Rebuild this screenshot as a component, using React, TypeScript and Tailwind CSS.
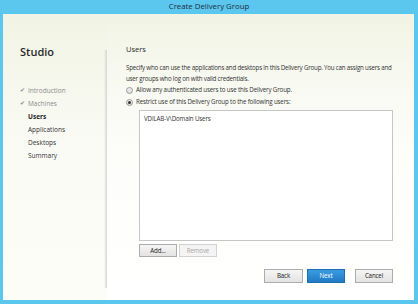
const steps = [
  { label: "Introduction", done: true },
  { label: "Machines", done: true },
  { label: "Users", current: true },
  { label: "Applications" },
  { label: "Desktops" },
  { label: "Summary" },
];

const Radio: React.FC<{ checked?: boolean }> = ({ checked }) => (
  <span className="w-[7px] h-[7px] rounded-full border border-[#9a9a9a] bg-gradient-to-b from-[#f0f0f0] to-[#dcdcdc] flex items-center justify-center shrink-0">
    {checked && <span className="w-[3px] h-[3px] rounded-full bg-[#333]" />}
  </span>
);

const App: React.FC = () => {
  return (
    <div className="w-[418px] h-[304px] bg-[#5bc6ee] flex flex-col font-['Open_Sans',sans-serif] overflow-hidden">
      <div className="h-[14px] flex items-center justify-center text-[7.8px] text-[#1c2e40]">Create Delivery Group</div>
      <div className="flex-1 ml-[3px] mr-[4px] mb-[4px] flex bg-gradient-to-b from-[#f1f4e4] via-[#fbfbf6] to-[#fdfdf8]">
        <aside className="w-[104px] shrink-0 relative pl-[17px] pt-[31px]">
          <div className="text-[11px] font-semibold text-[#2a2a2a] leading-[14px]">Studio</div>
          <ul className="mt-[25px] flex flex-col">
            {steps.map((s) => (
              <li key={s.label} className="h-[13px] flex items-center text-[6.5px]">
                <span className="w-[8px] text-[6px] text-[#8a8a8a]">{s.done ? "✔" : ""}</span>
                <span className={s.current ? "font-bold text-[#222]" : s.done ? "text-[#8c8c8c]" : "text-[#333]"}>{s.label}</span>
              </li>
            ))}
          </ul>
          <div className="absolute right-0 top-[36px] bottom-[12px] w-[3px] bg-gradient-to-r from-transparent to-[#d4d4d4]" />
        </aside>
        <main className="flex-1 pl-[19px] pr-[21px] pt-[30px] bg-gradient-to-b from-transparent to-white text-[#333] tracking-[-0.15px]">
          <div className="text-[7.5px] leading-[10px] text-[#2a2a2a] tracking-normal">Users</div>
          <p className="mt-[8px] mr-[-10px] text-[6.2px] leading-[11px] tracking-[-0.2px]">
            Specify who can use the applications and desktops in this Delivery Group. You can assign users and user groups who log on with valid credentials.
          </p>
          <label className="h-[12px] flex items-center gap-[3px] text-[6.2px]">
            <Radio />
            Allow any authenticated users to use this Delivery Group.
          </label>
          <label className="h-[12px] flex items-center gap-[3px] text-[6.2px]">
            <Radio checked />
            Restrict use of this Delivery Group to the following users:
          </label>
          <div className="ml-[13px] mt-[2px] h-[131px] border border-[#c6c6c6] bg-white px-[4px] pt-[3px] text-[6.2px]">
            VDILAB-V\Domain Users
          </div>
          <div className="ml-[13px] mt-[3px] flex gap-[2px]">
            <button className="w-[38px] h-[13px] border border-[#acacac] bg-gradient-to-b from-[#f5f5f5] to-[#e3e3e3] text-[6.2px] text-[#222]">Add...</button>
            <button className="w-[38px] h-[13px] border border-[#d2d2d2] bg-[#f4f4f4] text-[6.2px] text-[#a8a8a8]">Remove</button>
          </div>
          <div className="mt-[12px] flex justify-end gap-[4px]">
            <button className="w-[39px] h-[14px] border border-[#acacac] bg-gradient-to-b from-[#f5f5f5] to-[#e3e3e3] text-[6.2px] text-[#222]">Back</button>
            <button className="w-[38px] h-[14px] border border-[#1d6fae] bg-gradient-to-b from-[#3b9be0] to-[#1f7bc4] text-[6.2px] text-white mr-[6px]">Next</button>
            <button className="w-[38px] h-[14px] border border-[#acacac] bg-gradient-to-b from-[#f5f5f5] to-[#e3e3e3] text-[6.2px] text-[#222]">Cancel</button>
          </div>
        </main>
      </div>
    </div>
  );
};

export default App;
